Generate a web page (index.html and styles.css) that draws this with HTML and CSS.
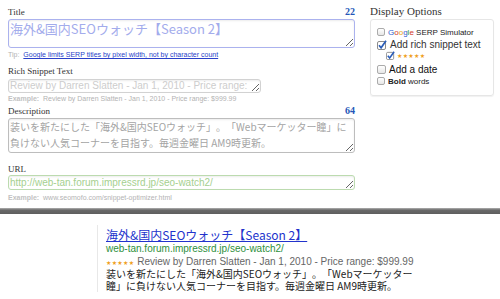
FILE: index.html
```html
<!DOCTYPE html>
<html lang="ja">
<head>
    <meta charset="UTF-8">
    <meta name="viewport" content="width=device-width, initial-scale=1.0">
    <title>SERP Snippet Optimizer</title>
    <link rel="stylesheet" href="styles.css">
</head>
<body>
    <div class="editor">
        <div class="fields">
            <div class="field-head">
                <label for="title">Title</label>
                <span class="count">22</span>
            </div>
            <textarea id="title" class="box box-title">海外&amp;国内SEOウォッチ【Season 2】</textarea>
            <p class="note note-tip">Tip: <a href="#">Google limits SERP titles by pixel width, not by character count</a></p>

            <div class="field-head head-snippet">
                <label for="snippet">Rich Snippet Text</label>
            </div>
            <textarea id="snippet" class="box box-snippet">Review by Darren Slatten - Jan 1, 2010 - Price range: $999.99</textarea>
            <p class="note note-snippet"><b>Example:</b>&nbsp; Review by Darren Slatten - Jan 1, 2010 - Price range: $999.99</p>

            <div class="field-head head-desc">
                <label for="desc">Description</label>
                <span class="count">64</span>
            </div>
            <textarea id="desc" class="box box-desc">装いを新たにした「海外&amp;国内SEOウォッチ」。「Webマーケッター瞳」に負けない人気コーナーを目指す。毎週金曜日 AM9時更新。</textarea>

            <div class="field-head head-url">
                <label for="url">URL</label>
            </div>
            <textarea id="url" class="box box-url">http://web-tan.forum.impressrd.jp/seo-watch2/</textarea>
            <p class="note note-url"><b>Example:</b>&nbsp; www.seomofo.com/snippet-optimizer.html</p>
        </div>

        <div class="options">
            <h3>Display Options</h3>
            <div class="option-box">
                <div class="opt opt-small">
                    <span class="check"></span>
                    <span><span class="g-blue">G</span><span class="g-red">o</span><span class="g-yellow">o</span><span class="g-blue">g</span><span class="g-green">l</span><span class="g-red">e</span> SERP Simulator</span>
                </div>
                <div class="opt opt-large">
                    <svg class="checked" width="10" height="10" viewBox="0 0 10 10"><rect x="0.5" y="1.5" width="8" height="8" rx="1.5" fill="#fff" stroke="#8c8c8c"/><path d="M2 5.2 L4.1 7.8 L9 0.8" fill="none" stroke="#2b5db8" stroke-width="1.7"/></svg>
                    <span>Add rich snippet text</span>
                </div>
                <div class="opt opt-stars">
                    <svg class="checked" width="9" height="9" viewBox="0 0 10 10"><rect x="0.5" y="1.5" width="8" height="8" rx="1.5" fill="#fff" stroke="#8c8c8c"/><path d="M2 5.2 L4.1 7.8 L9 0.8" fill="none" stroke="#2b5db8" stroke-width="1.7"/></svg>
                    <span class="stars">★★★★★</span>
                </div>
                <div class="opt opt-large opt-date">
                    <span class="check check-lg"></span>
                    <span>Add a date</span>
                </div>
                <div class="opt opt-small">
                    <span class="check"></span>
                    <span><b>Bold</b> words</span>
                </div>
            </div>
        </div>
    </div>

    <div class="divider"></div>

    <div class="preview">
        <a class="serp-title" href="#">海外&amp;国内SEOウォッチ【Season 2】</a>
        <div class="serp-url">web-tan.forum.impressrd.jp/seo-watch2/</div>
        <div class="serp-review"><span class="stars">★★★★★</span> Review by Darren Slatten - Jan 1, 2010 - Price range: $999.99</div>
        <div class="serp-desc">装いを新たにした「海外&amp;国内SEOウォッチ」。「Webマーケッター<br>瞳」に負けない人気コーナーを目指す。毎週金曜日 AM9時更新。</div>
    </div>
</body>
</html>
```

FILE: styles.css
```css
body {
    margin: 0;
    background-color: #ffffff;
    font-family: "Liberation Sans", Arial, sans-serif;
    color: #222;
    text-spacing-trim: space-all;
}

.editor {
    display: flex;
    padding-left: 8px;
}

.fields {
    width: 348px;
    padding-top: 6px;
}

/* label row with the optional character counter */
.field-head {
    display: flex;
    justify-content: space-between;
    align-items: baseline;
    height: 11px;
    line-height: 11px;
    margin-bottom: 2px;
    font-family: "Liberation Serif", "Times New Roman", serif;
}

.field-head label {
    font-size: 9px;
    color: #333;
}

.field-head .count {
    font-size: 10px;
    font-weight: bold;
    color: #2456b8;
    padding-right: 1px;
}

.head-snippet {
    margin-top: 7px;
}

.head-desc {
    margin-top: 2px;
}

.head-url {
    margin-top: 11px;
    margin-bottom: 0;
}

.box {
    display: block;
    box-sizing: border-box;
    width: 347px;
    margin: 0;
    padding: 0 2px 0 1px;
    border: 1px solid #c4c4c4;
    border-radius: 3px;
    box-shadow: inset 0 1px 2px rgba(0, 0, 0, 0.08);
    overflow: hidden;
    background-color: #fff;
    font-family: "Liberation Sans", Arial, sans-serif;
    text-spacing-trim: space-all;
}

.box-title {
    height: 29px;
    padding-top: 1px;
    border-color: #abb2ee;
    font-family: "Noto Sans CJK JP", sans-serif;
    font-size: 13px;
    line-height: 16px;
    color: #a3acec;
}

.box-snippet {
    width: 253px;
    height: 14px;
    border-color: #d2d2d2;
    font-size: 10px;
    line-height: 12px;
    color: #cdcdcd;
}

.box-desc {
    height: 35px;
    padding-top: 0;
    border-color: #bdbdbd;
    font-family: "Noto Sans CJK JP", sans-serif;
    font-size: 10px;
    line-height: 16px;
    color: #a4a4a4;
}

.box-url {
    height: 15px;
    border-color: #bcdbaf;
    font-size: 10px;
    line-height: 13px;
    color: #a5cf8f;
}

.note {
    margin: 0;
    font-size: 7px;
    line-height: 9px;
    color: #b3b3b3;
}

.note b {
    color: #c2c2c2;
}

.note a {
    color: #2a3fc9;
    margin-left: 2px;
}

.note-tip {
    margin-top: 2px;
}

.note-snippet {
    margin-top: 1px;
}

.note-url {
    margin-top: 3px;
}

/* right hand options panel */
.options {
    width: 124px;
    margin-left: 14px;
    padding-top: 4px;
}

.options h3 {
    margin: 0 0 1px;
    font-family: "Liberation Serif", "Times New Roman", serif;
    font-weight: normal;
    font-size: 11px;
    line-height: 14px;
    color: #333;
}

.option-box {
    border: 1px solid #e6e6e6;
    border-radius: 3px;
    box-shadow: 0 1px 1px rgba(0, 0, 0, 0.06);
    padding: 7px 4px 9px 6px;
}

.opt {
    display: flex;
    align-items: center;
    gap: 3px;
    color: #222;
}

.opt-small {
    height: 10px;
    font-size: 8px;
}

.opt-large {
    height: 13px;
    margin-top: 1px;
    font-size: 10px;
    color: #333;
}

.opt-stars {
    height: 9px;
    padding-left: 9px;
    gap: 2px;
}

.opt-date {
    margin-top: 3px;
    color: #111;
}

.check {
    display: inline-block;
    box-sizing: border-box;
    width: 8px;
    height: 8px;
    border: 1px solid #ababab;
    border-radius: 2px;
    background: linear-gradient(#ffffff, #e6e6e6);
}

.check-lg {
    width: 9px;
    height: 9px;
}

.checked {
    display: block;
}

.g-blue { color: #2f5fd0; }
.g-red { color: #d23a2a; }
.g-yellow { color: #e8a80c; }
.g-green { color: #2e9a3c; }

.stars {
    font-family: "DejaVu Sans", sans-serif;
    font-size: 6px;
    color: #efa11f;
    letter-spacing: 0.3px;
}

.divider {
    height: 6px;
    margin-top: 6px;
    background: linear-gradient(#b0b0b0, #696969 35%, #5e5e5e);
}

/* search result preview */
.preview {
    margin: 11px 0 0 97px;
    padding: 3px 0 0 8px;
    border-left: 1px solid #e8e8e8;
}

.serp-title {
    display: block;
    width: max-content;
    font-family: "Noto Sans CJK JP", sans-serif;
    font-size: 12px;
    line-height: 14px;
    color: #2233cc;
}

.serp-url {
    font-size: 10px;
    line-height: 14px;
    color: #2e8f3c;
}

.serp-review {
    font-size: 10px;
    line-height: 11px;
    color: #666;
}

.serp-desc {
    font-family: "Noto Sans CJK JP", sans-serif;
    font-size: 10px;
    line-height: 12px;
    color: #222;
}
```
